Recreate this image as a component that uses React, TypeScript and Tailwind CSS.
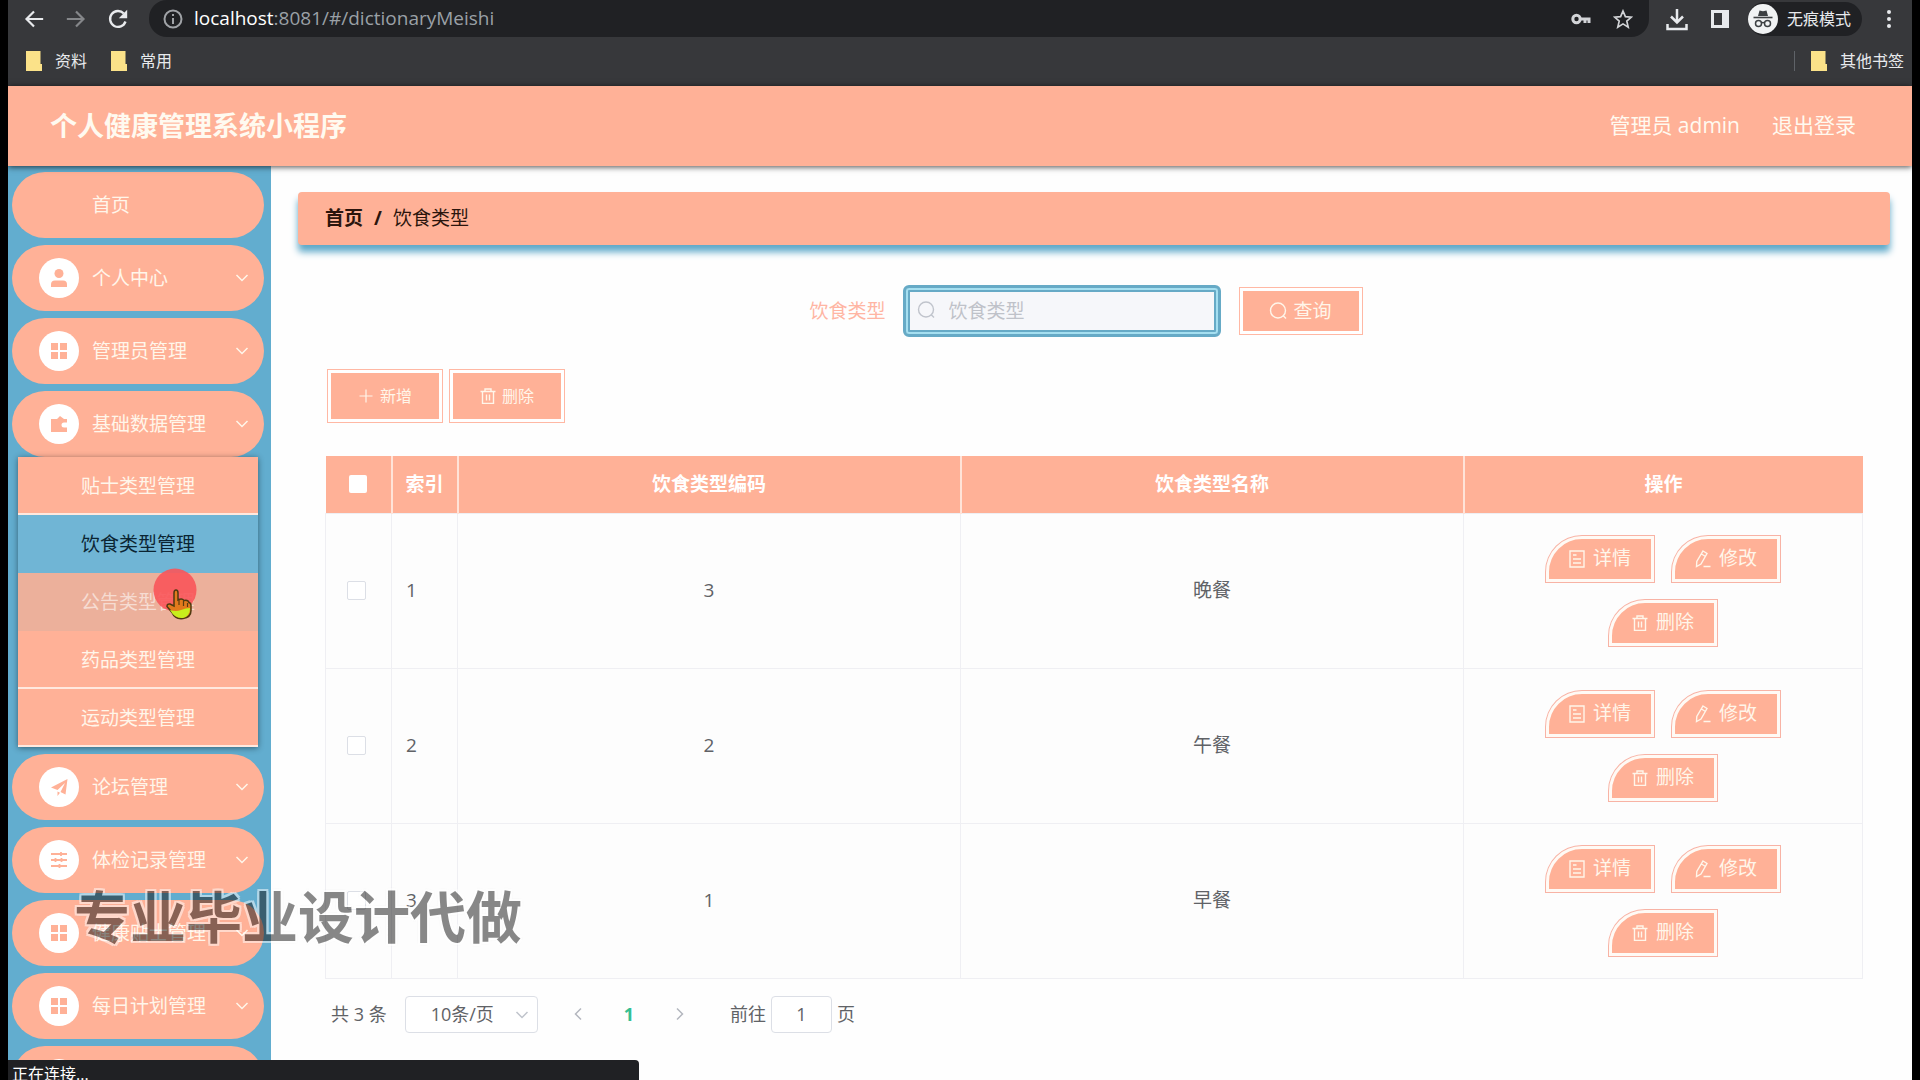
import { useState } from "react";
import type { ReactNode } from "react";
import clsx from "clsx";

type IconName = "user" | "grid" | "wallet" | "promotion" | "operation";

const MENU_TOP: { label: string; icon?: IconName }[] = [
  { label: "首页" },
  { label: "个人中心", icon: "user" },
  { label: "管理员管理", icon: "grid" },
  { label: "基础数据管理", icon: "wallet" },
];

const SUB_MENU = ["贴士类型管理", "饮食类型管理", "公告类型管理", "药品类型管理", "运动类型管理"];

const MENU_BOTTOM: { label: string; icon?: IconName }[] = [
  { label: "论坛管理", icon: "promotion" },
  { label: "体检记录管理", icon: "operation" },
  { label: "健康贴士管理", icon: "grid" },
  { label: "每日计划管理", icon: "grid" },
  { label: "", icon: "grid" },
];

const ROWS = [
  { index: 1, code: 3, name: "晚餐" },
  { index: 2, code: 2, name: "午餐" },
  { index: 3, code: 1, name: "早餐" },
];

export default function App() {
  return (
    <div className="h-screen overflow-hidden bg-black px-2 font-['Open_Sans','Noto_Sans_CJK_SC',sans-serif] text-[19px]">
      <div className="relative flex h-full flex-col overflow-hidden bg-[#fefefe]">
        <BrowserBar />
        <header className="relative z-10 flex h-20 shrink-0 items-center justify-between bg-[#ffb197] pr-14 pl-[42px] text-[#fffaf0] shadow-[0_1px_6px_rgba(0,0,0,0.7)]">
          <h1 className="text-[27px] font-bold">个人健康管理系统小程序</h1>
          <div className="flex items-center gap-8 text-[21px]">
            <span>管理员 admin</span>
            <button type="button">退出登录</button>
          </div>
        </header>
        <div className="flex min-h-0 flex-1">
          <Sidebar />
          <Content />
        </div>
        <div className="absolute bottom-0 left-0 h-5 w-[631px] overflow-hidden rounded-tr bg-[#202124] pl-1 text-[16px] leading-7 text-white">
          正在连接...
        </div>
        <div className="pointer-events-none absolute bottom-[122px] left-[66px] z-20 text-[56px] leading-[84px] font-bold text-[#141414] opacity-50 [text-shadow:2px_0_#fff,-2px_0_#fff,0_2px_#fff,0_-2px_#fff,2px_2px_#fff,-2px_-2px_#fff,2px_-2px_#fff,-2px_2px_#fff,0_0_3px_#888]">
          专业毕业设计代做
        </div>
      </div>
    </div>
  );
}

function BrowserBar() {
  return (
    <div className="flex h-[86px] shrink-0 flex-col bg-[#37383b] text-[#e8eaed]">
      <div className="flex h-[37px] items-center pl-4">
        <div className="flex w-[125px] gap-[22px]">
          <button type="button" aria-label="后退">
            <svg className="h-5 w-5" viewBox="0 0 24 24" fill="none" stroke="currentColor" strokeWidth="2.6">
              <path d="M23 12H4M12 3 3 12l9 9" />
            </svg>
          </button>
          <button type="button" aria-label="前进" className="text-[#85878a]">
            <svg className="h-5 w-5" viewBox="0 0 24 24" fill="none" stroke="currentColor" strokeWidth="2.6">
              <path d="M1 12h19M12 3l9 9-9 9" />
            </svg>
          </button>
          <button type="button" aria-label="刷新">
            <svg className="h-5 w-5" viewBox="0 0 24 24" fill="none" stroke="currentColor" strokeWidth="2.8">
              <path d="M21 15A9.500 9.500 0 1 1 19 5.500" />
              <path d="M23 1v10H13z" fill="currentColor" stroke="none" />
            </svg>
          </button>
        </div>
        <div className="flex h-[37px] min-w-0 flex-1 items-center rounded-b-[18px] rounded-tl-[18px] bg-[#202124] pr-4 pl-[14px]">
          <svg className="h-5 w-5 shrink-0 text-[#a0a3a7]" viewBox="0 0 20 20" fill="none" stroke="currentColor" strokeWidth="2">
            <circle cx="10" cy="10" r="8.5" />
            <path d="M10 9v6M10 5v2" />
          </svg>
          <p className="ml-[11px] flex-1 text-[19px] text-[#9aa0a6]">
            <span className="text-white">localhost</span>:8081/#/dictionaryMeishi
          </p>
          <svg className="h-5 w-5 shrink-0 text-[#d2d4d7]" viewBox="0 0 20 20" fill="none" stroke="currentColor" strokeWidth="3">
            <circle cx="5.5" cy="10" r="3.7" />
            <path d="M9 10h10.500M14 10v4M18 10v4" />
          </svg>
          <svg className="ml-[22px] h-5 w-5 shrink-0 text-[#d2d4d7]" viewBox="0 0 20 20" fill="none" stroke="currentColor" strokeWidth="1.7">
            <path d="m10 2 2.400 5.600 6 .5-4.600 4 1.400 6-5.200-3.200-5.200 3.200 1.400-6-4.600-4 6-.5z" />
          </svg>
        </div>
        <svg className="ml-[17px] h-6 w-[22px] shrink-0" viewBox="0 0 22 24" fill="none" stroke="currentColor" strokeWidth="2.5">
          <path d="M11 2v13M5 9.500l6 6 6-6M1.500 17v5h19v-5" />
        </svg>
        <svg className="ml-[22px] h-5 w-5 shrink-0" viewBox="0 0 20 20">
          <path d="M1 1h18v18H1zm3 3v12h8V4z" fill="currentColor" fillRule="evenodd" />
        </svg>
        <div className="ml-[18px] flex h-[34px] items-center gap-[9px] rounded-full bg-[#202124] pr-[11px] text-[16px]">
          <svg className="h-[30px] w-[30px]" viewBox="0 0 30 30" fill="none">
            <circle cx="15" cy="15" r="15" fill="#f1f3f4" />
            <path d="m10 12 1.500-5.500 3.500.8 3.500-.8L20 12z" fill="#3c4043" />
            <path d="M5.500 13.500h19" stroke="#3c4043" strokeWidth="1.6" />
            <circle cx="10.5" cy="19.5" r="3" stroke="#3c4043" strokeWidth="1.5" />
            <circle cx="19.5" cy="19.5" r="3" stroke="#3c4043" strokeWidth="1.5" />
            <path d="M13.500 19q1.500-1 3 0" stroke="#3c4043" strokeWidth="1.5" />
          </svg>
          无痕模式
        </div>
        <button type="button" aria-label="菜单" className="mr-[13px] ml-[17px]">
          <svg className="h-5 w-5" viewBox="0 0 20 20" fill="currentColor">
            <circle cx="10" cy="3" r="2" />
            <circle cx="10" cy="10" r="2" />
            <circle cx="10" cy="17" r="2" />
          </svg>
        </button>
      </div>
      <div className="flex h-12 items-center justify-between pr-2 pl-[18px] text-[16px]">
        <div className="flex gap-6">
          <Bookmark label="资料" />
          <Bookmark label="常用" />
        </div>
        <div className="flex items-center gap-4">
          <span className="h-5 w-px bg-[#5f6368]" />
          <Bookmark label="其他书签" />
        </div>
      </div>
    </div>
  );
}

function Bookmark({ label }: { label: string }) {
  return (
    <a href="#" className="flex items-center gap-[13px]">
      <svg className="h-5 w-4" viewBox="0 0 16 20">
        <path d="M0 0h14.500v13H16v7H0z" fill="#fbe289" />
      </svg>
      {label}
    </a>
  );
}

function Sidebar() {
  return (
    <nav className="w-[263px] shrink-0 overflow-hidden bg-[#62adcf] pt-[6px] pr-[7px] pl-1">
      <div className="flex flex-col gap-[7px]">
        {MENU_TOP.map((item) => (
          <MenuItem key={item.label} {...item} />
        ))}
      </div>
      <ul className="relative mx-[6px] mb-[7px] shadow-[0_1px_6px_rgba(0,0,0,0.45)]">
        {SUB_MENU.map((label, i) => (
          <li key={label}>
            <a
              href="#"
              className={clsx(
                "flex h-[58px] items-center justify-center",
                i === 1 && "bg-[#70b5d5] text-[#0b2533]",
                i === 2 && "bg-[#ecb09b] text-[#f6dcd2]",
                i !== 1 && i !== 2 && "border-b-2 border-[#ffe9df] bg-[#ffb197] pt-[2px] text-[#fff6ea]"
              )}
            >
              {label}
            </a>
          </li>
        ))}
        <Pointer />
      </ul>
      <div className="flex flex-col gap-[7px]">
        {MENU_BOTTOM.map((item) => (
          <MenuItem key={item.label} {...item} />
        ))}
      </div>
    </nav>
  );
}

function MenuItem({ label, icon }: { label: string; icon?: IconName }) {
  return (
    <button
      type="button"
      className="flex h-[66px] w-full shrink-0 items-center rounded-[33px] bg-[#ffb197] pr-[14px] pl-[27px] text-left text-[#fff6ea]"
    >
      <span className={clsx("flex h-10 w-10 items-center justify-center rounded-full", icon && "bg-white")}>
        {icon && <MenuIcon name={icon} />}
      </span>
      <span className="ml-[13px] flex-1">{label}</span>
      {icon && <Chevron className="h-4 w-4" />}
    </button>
  );
}

function MenuIcon({ name }: { name: IconName }) {
  return (
    <svg className="h-[18px] w-[18px] text-[#ffb197]" viewBox="0 0 18 18" fill="currentColor">
      {name === "user" && (
        <>
          <circle cx="9" cy="4.5" r="4.5" />
          <path d="M1 18v-2.500Q1 11.500 5 11.500h8q4 0 4 4V18z" />
        </>
      )}
      {name === "grid" && <path d="M1 1h7v7H1zM10 1h7v7h-7zM1 10h7v7H1zM10 10h7v7h-7z" />}
      {name === "wallet" && (
        <path d="M1 4h6l3-3 4 3h3v3.500h-3a2.500 2.500 0 0 0 0 5h3V17H1z" />
      )}
      {name === "promotion" && <path d="m17.500 1-2 15.500-5-2.500L15 5 7.500 12 1 9.500zM7.500 13.500l2.500 1.300L7.500 18z" />}
      {name === "operation" && (
        <path
          d="M1 3h16M1 9h16M1 15h16M11 1v4M5.500 7v4M11.500 7v4M9.500 13v4"
          fill="none"
          stroke="currentColor"
          strokeWidth="1.8"
        />
      )}
    </svg>
  );
}

function Chevron({ className }: { className?: string }) {
  return (
    <svg className={className} viewBox="0 0 16 16" fill="none" stroke="currentColor" strokeWidth="1.5">
      <path d="m2.500 5 5.500 5.500L13.500 5" />
    </svg>
  );
}

function Pointer() {
  return (
    <svg className="pointer-events-none absolute top-[110px] left-[134px] h-[54px] w-[46px]" viewBox="0 0 46 54">
      <circle cx="23" cy="23" r="21.5" fill="#f9555a" fillOpacity="0.9" />
      <path
        d="M22 26q0-3 2-3t2 3v7q4-2 6 .5 4-1 5 2 2 .5 2 3v5q0 7-8 8t-11-6l-5-6q0-3 3-2.500l4 2z"
        fill="#e27a1c"
        stroke="#4f3a10"
        strokeWidth="1.5"
      />
      <path d="M18 43q6 2 11 0 5-2 9-2 0 8-7 10-8 1-13-8z" fill="#c8ef1c" />
      <path d="M27 33v5M31.500 34v5M35.500 36v4" stroke="#5c3c10" strokeWidth="1.2" />
    </svg>
  );
}

function Content() {
  const [keyword, setKeyword] = useState("");

  return (
    <main className="min-w-0 flex-1 pt-[26px] pr-[22px] pl-[27px]">
      <div className="flex h-[53px] items-center gap-[11px] rounded bg-[#ffb197] px-[27px] text-[#2b150d] shadow-[0_7px_7px_#5fa9c9]">
        <a href="#" className="font-bold">首页</a>
        <span className="font-bold">/</span>
        <span>饮食类型</span>
      </div>
      <div className="pr-[27px] pl-[27px]">
        <form
          className="mt-10 flex items-center justify-center pr-[17px]"
          onSubmit={(e) => e.preventDefault()}
        >
          <label htmlFor="keyword" className="text-[#ffb5a3]">饮食类型</label>
          <div className="relative ml-[17px]">
            <SearchIcon className="absolute top-4 left-[14px] h-[18px] w-[18px] text-[#c0c4cc]" />
            <input
              id="keyword"
              value={keyword}
              onChange={(e) => setKeyword(e.target.value)}
              placeholder="饮食类型"
              className="h-[52px] w-[318px] rounded-md border-[3px] border-[#66aac6] bg-[#f6f7fa] pr-4 pl-[43px] shadow-[inset_0_0_0_2px_#a5dff0,inset_0_0_0_4px_#66aac6] outline-none placeholder:text-[#bfc2c9]"
            />
          </div>
          <button
            type="submit"
            className="ml-[19px] flex h-[46px] w-[122px] items-center justify-center gap-[6px] border-[3px] border-white bg-[#ffb197] text-[#fff6ea] shadow-[0_0_0_1px_#ffb8a4]"
          >
            <SearchIcon className="h-[18px] w-[18px]" />
            查询
          </button>
        </form>
        <div className="mt-[33px] flex gap-2 pl-[3px] text-[16px]">
          <ToolButton icon={<PlusIcon />} label="新增" />
          <ToolButton icon={<TrashIcon />} label="删除" />
        </div>
        <DataTable />
        <Pagination />
      </div>
    </main>
  );
}

function ToolButton({ icon, label }: { icon: ReactNode; label: string }) {
  return (
    <button
      type="button"
      className="flex h-[52px] w-[114px] items-center justify-center gap-[6px] border-[3px] border-white bg-[#ffb197] text-[#fff6ea] shadow-[0_0_0_1px_#ffb8a4]"
    >
      {icon}
      {label}
    </button>
  );
}

function DataTable() {
  return (
    <table className="mt-[34px] w-full table-fixed border-collapse text-center">
      <colgroup>
        <col className="w-[66px]" />
        <col className="w-[66px]" />
        <col />
        <col />
        <col className="w-[399px]" />
      </colgroup>
      <thead>
        <tr className="h-[57px] bg-[#ffb197] text-white">
          <th className="border-r-2 border-[#ffe3d8]">
            <input type="checkbox" aria-label="全选" className="mx-auto block h-[18px] w-[18px] appearance-none rounded-xs bg-white" />
          </th>
          <th className="border-r-2 border-[#ffe3d8]">索引</th>
          <th className="border-r-2 border-[#ffe3d8]">饮食类型编码</th>
          <th className="border-r-2 border-[#ffe3d8]">饮食类型名称</th>
          <th>操作</th>
        </tr>
      </thead>
      <tbody className="text-[#606266]">
        {ROWS.map((row) => (
          <tr key={row.index} className="h-[155px] bg-[#fdfdfd]">
            <td className="border border-[#efeff3] pr-1">
              <input
                type="checkbox"
                aria-label={`选择 ${row.name}`}
                className="mx-auto block h-[19px] w-[19px] appearance-none rounded-xs border border-[#dcdfe6] bg-white"
              />
            </td>
            <td className="border border-[#efeff3] pl-[14px] text-left">{row.index}</td>
            <td className="border border-[#efeff3]">{row.code}</td>
            <td className="border border-[#efeff3]">{row.name}</td>
            <td className="border border-[#efeff3]">
              <div className="flex flex-wrap justify-center gap-[18px] px-16">
                <RowButton icon={<DocIcon />} label="详情" />
                <RowButton icon={<EditIcon />} label="修改" />
                <RowButton icon={<TrashIcon />} label="删除" />
              </div>
            </td>
          </tr>
        ))}
      </tbody>
    </table>
  );
}

function RowButton({ icon, label }: { icon: ReactNode; label: string }) {
  return (
    <button
      type="button"
      className="flex h-[46px] w-[108px] items-center justify-center gap-2 rounded-tl-[36px] border-[3px] border-[#fffaf5] bg-[#ffb197] text-[#fff6ea] shadow-[0_0_0_1px_#f8b3a5]"
    >
      {icon}
      {label}
    </button>
  );
}

function Pagination() {
  const [page, setPage] = useState("1");

  return (
    <div className="mt-[17px] flex items-center pl-[6px] text-[18px] text-[#606266]">
      <span>共 3 条</span>
      <div className="relative ml-[18px]">
        <select
          aria-label="每页条数"
          className="h-[37px] w-[133px] appearance-none rounded-sm border border-[#dcdfe6] bg-white pl-[25px]"
        >
          <option>10条/页</option>
        </select>
        <Chevron className="pointer-events-none absolute top-[11px] right-2 h-4 w-4 text-[#c0c4cc]" />
      </div>
      <button type="button" aria-label="上一页" className="ml-8">
        <Chevron className="h-4 w-4 rotate-90 text-[#b4b7bf]" />
      </button>
      <button type="button" className="ml-[38px] font-bold text-[#35bf92]">1</button>
      <button type="button" aria-label="下一页" className="ml-[38px]">
        <Chevron className="h-4 w-4 -rotate-90 text-[#b4b7bf]" />
      </button>
      <label className="ml-[42px] flex items-center gap-[5px]">
        前往
        <input
          value={page}
          onChange={(e) => setPage(e.target.value)}
          className="h-[37px] w-[61px] rounded border border-[#dcdfe6] bg-white text-center"
        />
        页
      </label>
    </div>
  );
}

function SearchIcon({ className }: { className?: string }) {
  return (
    <svg className={className} viewBox="0 0 18 18" fill="none" stroke="currentColor" strokeWidth="1.4">
      <circle cx="9" cy="8.5" r="7.5" />
      <path d="m14 13.500 3 3" />
    </svg>
  );
}

function PlusIcon() {
  return (
    <svg className="h-4 w-4" viewBox="0 0 16 16" stroke="currentColor" strokeWidth="1.2">
      <path d="M8 1.500v13M1.500 8h13" />
    </svg>
  );
}

function TrashIcon() {
  return (
    <svg className="h-4 w-4" viewBox="0 0 16 16" fill="none" stroke="currentColor" strokeWidth="1.4">
      <path d="M.5 3.500h15M5 3.500V1h6v2.500M2.500 3.500v12h11v-12M6.500 6.500v6M9.500 6.500v6" />
    </svg>
  );
}

function DocIcon() {
  return (
    <svg className="h-[18px] w-4" viewBox="0 0 16 18" fill="none" stroke="currentColor" strokeWidth="1.4">
      <path d="M1 1h14v16H1zM4 5h3.500M4 9h8M4 13h8" />
    </svg>
  );
}

function EditIcon() {
  return (
    <svg className="h-[18px] w-4" viewBox="0 0 16 18" fill="none" stroke="currentColor" strokeWidth="1.4">
      <path d="m8 1 4 2.500L6 14l-4.500 2.500.3-5zM6.500 4l4 2.500M8.500 16.500h7" />
    </svg>
  );
}
